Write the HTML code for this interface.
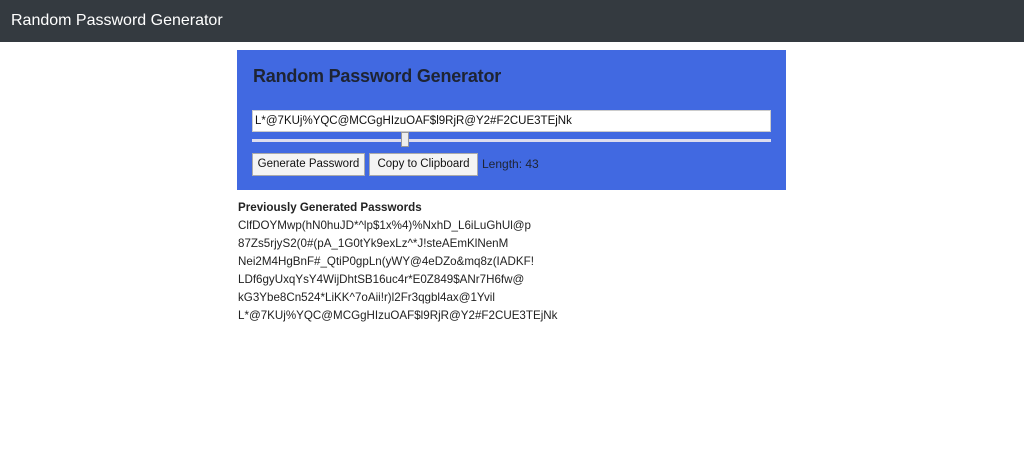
<!DOCTYPE html>
<html><head><meta charset="utf-8"><style>
body{margin:0;font-family:"Liberation Sans",sans-serif;background:#fff;color:#212529;}
.nav{height:42px;background:#343a40;color:#fff;font-size:16px;line-height:42px;padding-left:11px;}
.box{position:absolute;left:237px;top:50px;width:549px;height:140px;background:#4169e1;}
h1{position:absolute;left:16px;top:16px;margin:0;font-size:18px;font-weight:bold;color:#1e2433;letter-spacing:-0.2px;}
.inp{position:absolute;left:15px;top:60px;background:#fff;border:1px solid #ccc;font-size:11.5px;line-height:20px;padding-left:2px;box-sizing:border-box;width:519px;height:22px;color:#111;white-space:nowrap;}
.track{position:absolute;left:15px;top:89px;width:519px;height:3px;background:#dde;}
.thumb{position:absolute;left:164px;top:82px;width:8px;height:15px;background:#eee;border:1px solid #999;box-sizing:border-box;}
.btn{position:absolute;top:103px;height:23px;background:#f4f4f4;border:1px solid #aaa;box-sizing:border-box;font-size:11.5px;line-height:21px;padding:0 3px;color:#111;white-space:nowrap;overflow:hidden;text-align:center;}
.len{position:absolute;left:245px;top:103px;line-height:23px;font-size:12px;color:#1e2433;white-space:nowrap;}
.list{position:absolute;left:238px;top:199px;font-size:11.6px;line-height:18px;color:#222;white-space:nowrap;}
.list b{display:block;}
</style></head><body>
<div class="nav">Random Password Generator</div>
<div class="box">
<h1>Random Password Generator</h1>
<div class="inp">L*@7KUj%YQC@MCGgHIzuOAF$l9RjR@Y2#F2CUE3TEjNk</div>
<div class="track"></div><div class="thumb"></div>
<div class="btn" style="left:15px;width:113px">Generate Password</div>
<div class="btn" style="left:132px;width:109px">Copy to Clipboard</div>
<div class="len">Length: 43</div>
</div>
<div class="list"><b>Previously Generated Passwords</b>
ClfDOYMwp(hN0huJD*^lp$1x%4)%NxhD_L6iLuGhUl@p<br>
87Zs5rjyS2(0#(pA_1G0tYk9exLz^*J!steAEmKlNenM<br>
Nei2M4HgBnF#_QtiP0gpLn(yWY@4eDZo&amp;mq8z(IADKF!<br>
LDf6gyUxqYsY4WijDhtSB16uc4r*E0Z849$ANr7H6fw@<br>
kG3Ybe8Cn524*LiKK^7oAii!r)l2Fr3qgbl4ax@1Yvil<br>
L*@7KUj%YQC@MCGgHIzuOAF$l9RjR@Y2#F2CUE3TEjNk</div>
</body></html>
